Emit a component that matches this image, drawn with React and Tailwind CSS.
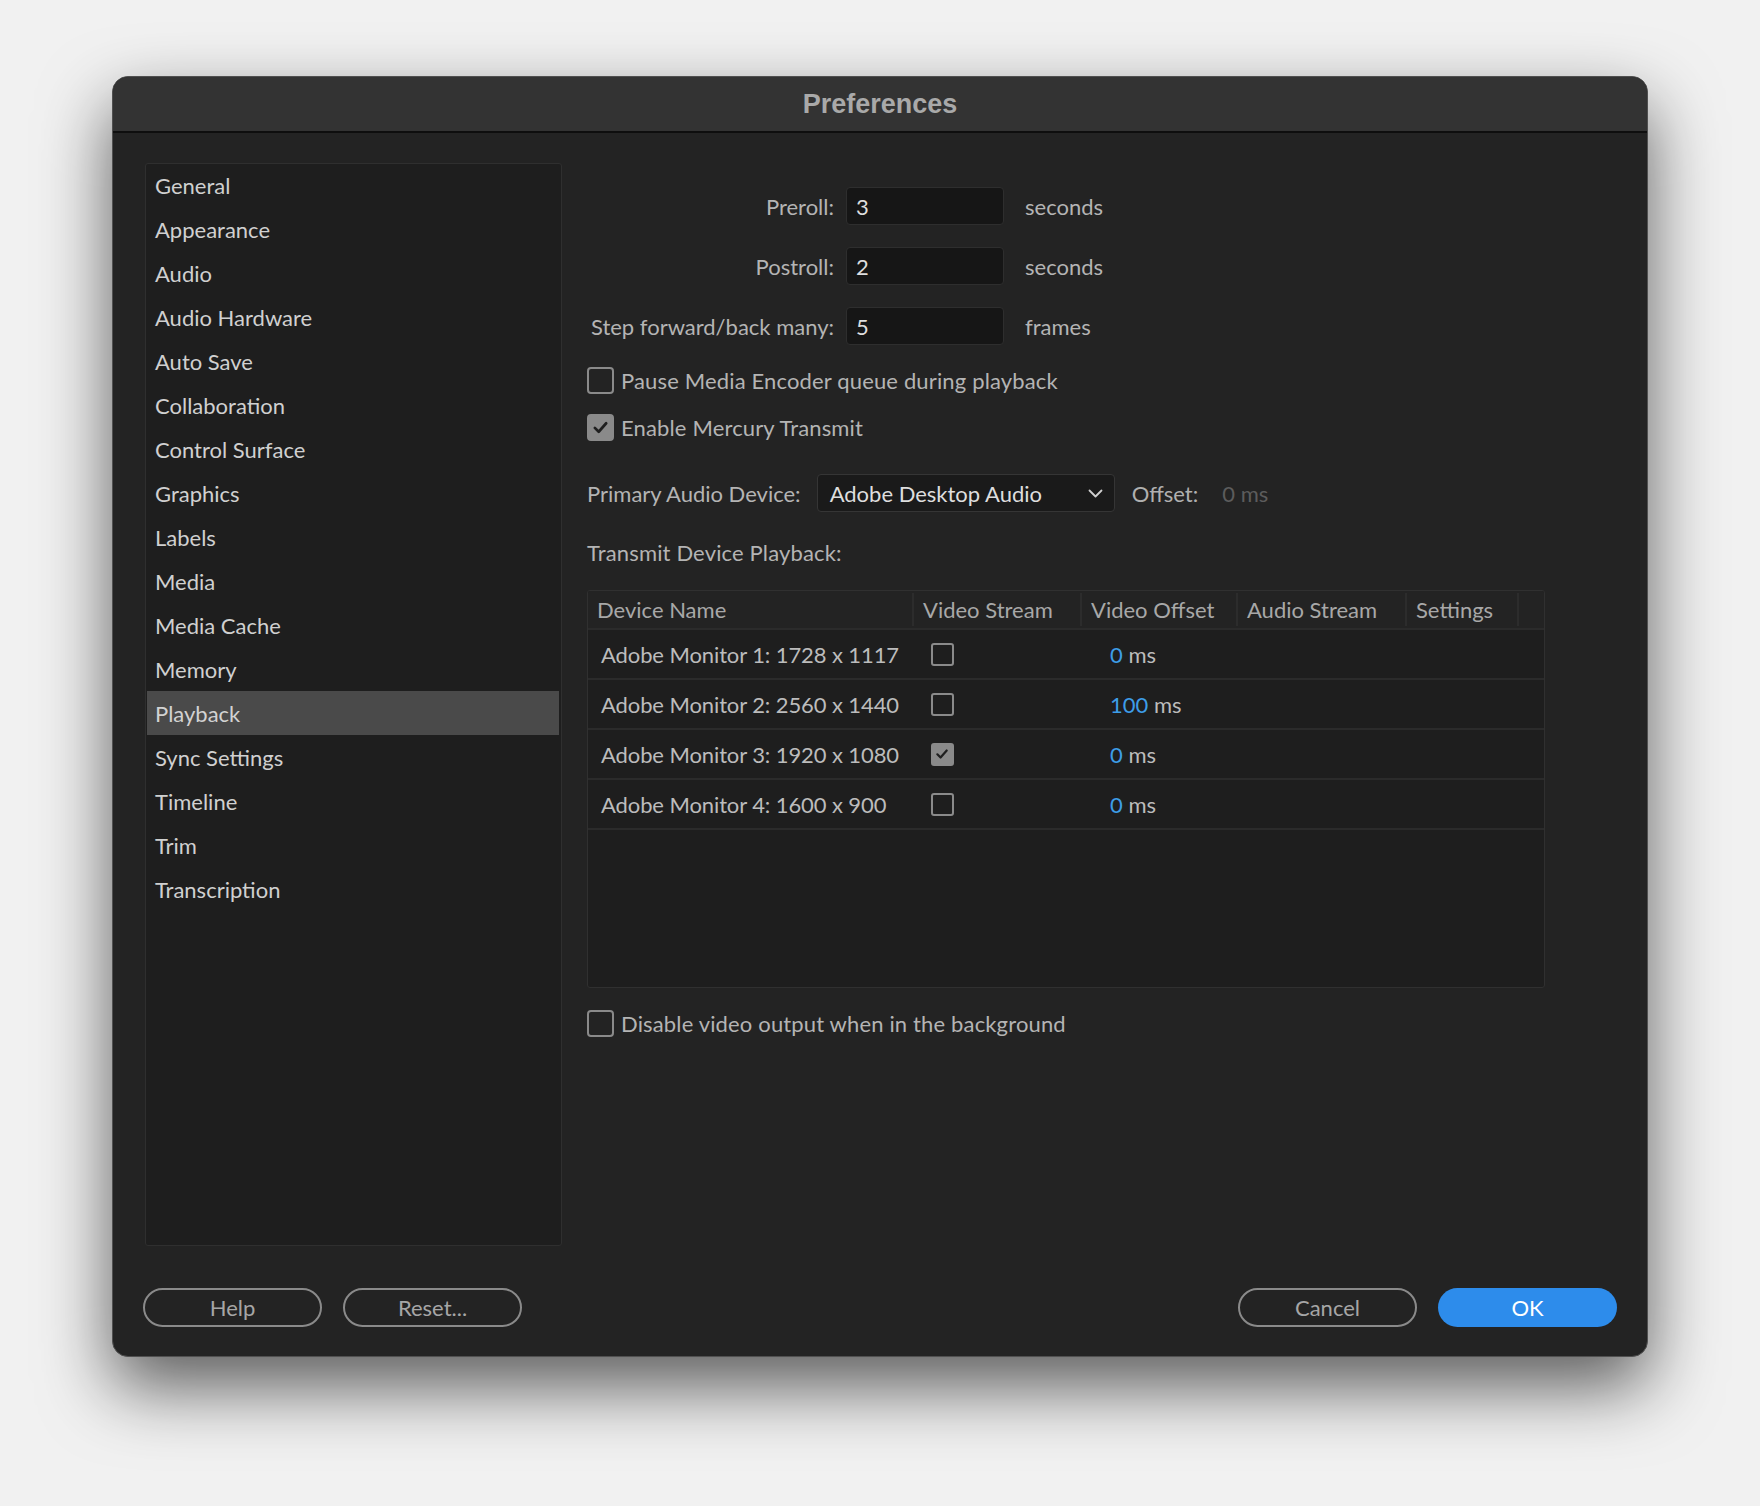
import React, { useState } from "react";

const font = { fontFamily: "Lato, 'Open Sans', sans-serif" };

const sections = [
  "General",
  "Appearance",
  "Audio",
  "Audio Hardware",
  "Auto Save",
  "Collaboration",
  "Control Surface",
  "Graphics",
  "Labels",
  "Media",
  "Media Cache",
  "Memory",
  "Playback",
  "Sync Settings",
  "Timeline",
  "Trim",
  "Transcription",
];

const devices = [
  { name: "Adobe Monitor 1: 1728 x 1117", on: false, offset: 0 },
  { name: "Adobe Monitor 2: 2560 x 1440", on: false, offset: 100 },
  { name: "Adobe Monitor 3: 1920 x 1080", on: true, offset: 0 },
  { name: "Adobe Monitor 4: 1600 x 900", on: false, offset: 0 },
];

const Check = ({ checked, size = "big", onChange }) => {
  const box = size === "big" ? "w-[27px] h-[27px] rounded-[4px]" : "w-[23px] h-[23px] rounded-[3px]";
  return (
    <button
      onClick={onChange}
      className={`${box} shrink-0 flex items-center justify-center border-[2.5px] border-[#8a8a8a] ${checked ? "bg-[#8a8a8a]" : "bg-transparent"}`}
    >
      {checked && (
        <svg width="74%" height="74%" viewBox="0 0 24 24" fill="none" stroke="#1f1f1f" strokeWidth="3.8" strokeLinecap="round" strokeLinejoin="round">
          <polyline points="4,12.5 9.5,18 20,6" />
        </svg>
      )}
    </button>
  );
};

const NumberRow = ({ label, value, unit, first }) => (
  <div className={`flex items-center h-[38px] ${first ? "" : "mt-[22px]"}`}>
    <span className="w-[247px] shrink-0 whitespace-nowrap text-right text-[#b4b4b4]">{label}</span>
    <div className="ml-[12px] w-[158px] h-[38px] bg-[#161616] border border-[#2e2e2e] rounded-[4px] flex items-center px-[9px] text-[#dedede]">
      {value}
    </div>
    <span className="ml-[21px] text-[#b4b4b4]">{unit}</span>
  </div>
);

const PillButton = ({ children, primary }) => (
  <button
    className={`w-[179px] h-[39px] rounded-full text-[22px] flex items-center justify-center ${
      primary ? "bg-[#2d8ceb] text-white" : "border-[2.5px] border-[#8a8a8a] text-[#a6a6a6]"
    }`}
  >
    {children}
  </button>
);

export default function App() {
  const [active, setActive] = useState("Playback");
  const [pause, setPause] = useState(false);
  const [mercury, setMercury] = useState(true);
  const [disableBg, setDisableBg] = useState(false);
  const [rows, setRows] = useState(devices);

  const toggleRow = (i) => setRows(rows.map((r, j) => (j === i ? { ...r, on: !r.on } : r)));

  return (
    <div className="min-h-[1506px] w-[1760px] bg-[#f1f1f1] pt-[76px] pl-[112px]" style={font}>
      <div className="w-[1536px] h-[1281px] flex flex-col rounded-[16px] overflow-hidden border border-[#505050] bg-[#232323] shadow-[0_30px_70px_rgba(0,0,0,0.62)] text-[22px]">
        {/* title bar */}
        <div className="h-[56px] shrink-0 bg-[#333333] border-b-2 border-[#0e0e0e] flex items-center justify-center">
          <span className="text-[27px] font-bold text-[#a9a9a9]" style={{ fontFamily: "'Liberation Sans', Arial, sans-serif" }}>
            Preferences
          </span>
        </div>

        <div className="flex-1 flex flex-col px-[30px] pt-[30px] pb-[29px]">
          <div className="flex">
            {/* sidebar */}
            <div className="ml-[2px] w-[417px] h-[1083px] bg-[#1e1e1e] border border-[#2f2f2f] rounded-[3px] px-[1px] pr-[2px] overflow-hidden">
              <div className="-mt-[1px]">
                {sections.map((s) => (
                  <div
                    key={s}
                    onClick={() => setActive(s)}
                    className={`h-[44px] flex items-center px-[8px] cursor-default ${
                      active === s ? "bg-[#4a4a4a] text-[#d2d2d2]" : "text-[#d0d0d0]"
                    }`}
                  >
                    {s}
                  </div>
                ))}
              </div>
            </div>

            {/* playback settings */}
            <div className="ml-[25px] flex-1 pt-[24px] flex flex-col">
              <NumberRow label="Preroll:" value="3" unit="seconds" first />
              <NumberRow label="Postroll:" value="2" unit="seconds" />
              <NumberRow label="Step forward/back many:" value="5" unit="frames" />

              <div className="mt-[22px] flex items-center gap-[7px] h-[27px]">
                <Check checked={pause} onChange={() => setPause(!pause)} />
                <span className="text-[#b4b4b4] tracking-[0.15px]">Pause Media Encoder queue during playback</span>
              </div>
              <div className="mt-[20px] flex items-center gap-[7px] h-[27px]">
                <Check checked={mercury} onChange={() => setMercury(!mercury)} />
                <span className="text-[#b4b4b4] tracking-[0.15px]">Enable Mercury Transmit</span>
              </div>

              <div className="mt-[33px] flex items-center h-[38px]">
                <span className="text-[#b4b4b4]">Primary Audio Device:</span>
                <div className="ml-[16px] w-[298px] h-[38px] bg-[#1a1a1a] border border-[#353535] rounded-[4px] flex items-center justify-between pl-[12px] pr-[11px] text-[#dedede]">
                  <span>Adobe Desktop Audio</span>
                  <svg width="15" height="9" viewBox="0 0 15 9" fill="none" stroke="#cfcfcf" strokeWidth="1.8" strokeLinecap="round" strokeLinejoin="round">
                    <polyline points="1.5,1.5 7.5,7.5 13.5,1.5" />
                  </svg>
                </div>
                <span className="ml-[17px] text-[#b0b0b0]">Offset:</span>
                <span className="ml-[24px] text-[#5c5c5c]">0 ms</span>
              </div>

              <div className="mt-[25px] h-[30px] flex items-center text-[#b4b4b4] tracking-[0.15px]">Transmit Device Playback:</div>

              {/* device table */}
              <div className="mt-[23px] w-[958px] h-[398px] border border-[#303030] rounded-[3px] bg-[#1e1e1e] flex flex-col overflow-hidden">
                <div className="h-[39px] shrink-0 bg-[#232323] border-b-2 border-[#2b2b2b] grid grid-cols-[326px_168px_156px_169px_112px_1fr] text-[#a8a8a8]">
                  {["Device Name", "Video Stream", "Video Offset", "Audio Stream", "Settings", ""].map((h, i) => (
                    <div key={i} className={`flex items-center pl-[9px] ${i < 5 ? "border-r-2 border-[#2c2c2c] my-[2px]" : ""}`}>
                      {h}
                    </div>
                  ))}
                </div>
                {rows.map((r, i) => (
                  <div key={r.name} className="h-[50px] shrink-0 border-b-2 border-[#2b2b2b] grid grid-cols-[326px_168px_156px_169px_112px_1fr] items-center text-[#bcbcbc]">
                    <span className="pl-[13px] tracking-[-0.1px]">{r.name}</span>
                    <div className="pl-[17px] flex items-center">
                      <Check size="small" checked={r.on} onChange={() => toggleRow(i)} />
                    </div>
                    <span className="pl-[28px]">
                      <span className="text-[#3d9de8]">{r.offset}</span> ms
                    </span>
                    <span />
                    <span />
                    <span />
                  </div>
                ))}
              </div>

              <div className="mt-[22px] flex items-center gap-[7px] h-[27px]">
                <Check checked={disableBg} onChange={() => setDisableBg(!disableBg)} />
                <span className="text-[#b4b4b4] tracking-[0.15px]">Disable video output when in the background</span>
              </div>
            </div>
          </div>

          {/* footer buttons */}
          <div className="mt-auto flex items-center">
            <div className="flex gap-[21px]">
              <PillButton>Help</PillButton>
              <PillButton>Reset...</PillButton>
            </div>
            <div className="ml-auto flex gap-[21px]">
              <PillButton>Cancel</PillButton>
              <PillButton primary>OK</PillButton>
            </div>
          </div>
        </div>
      </div>
    </div>
  );
}
